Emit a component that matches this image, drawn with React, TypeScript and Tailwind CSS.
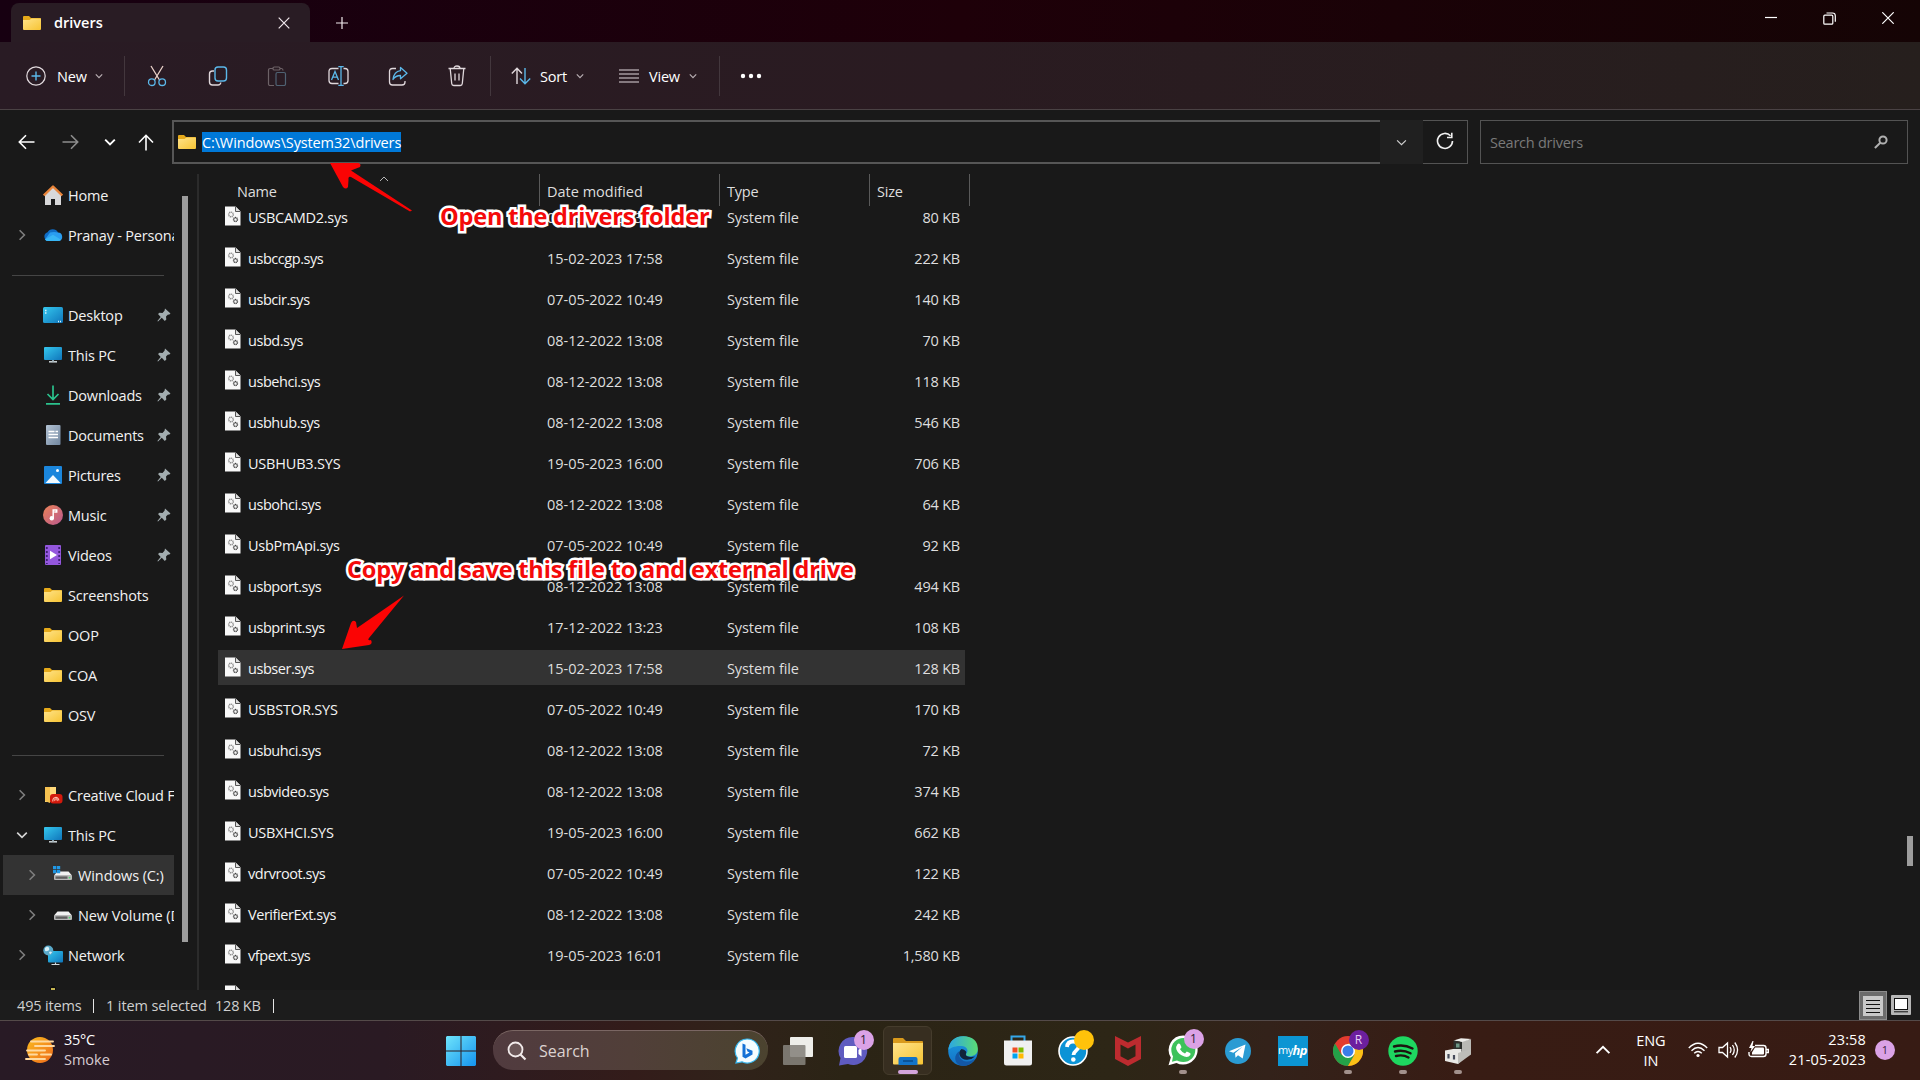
import { useState } from "react";
import type { ReactNode } from "react";

interface DriverFile {
  name: string;
  modified: string;
  size: string;
}

interface NavItem {
  label: string;
  icon: ReactNode;
  pinned?: boolean;
  chevron?: "right" | "down";
  nested?: boolean;
  active?: boolean;
}

const FILES: DriverFile[] = [
  { name: "USBCAMD2.sys", modified: "08-12-2022 13:08", size: "80 KB" },
  { name: "usbccgp.sys", modified: "15-02-2023 17:58", size: "222 KB" },
  { name: "usbcir.sys", modified: "07-05-2022 10:49", size: "140 KB" },
  { name: "usbd.sys", modified: "08-12-2022 13:08", size: "70 KB" },
  { name: "usbehci.sys", modified: "08-12-2022 13:08", size: "118 KB" },
  { name: "usbhub.sys", modified: "08-12-2022 13:08", size: "546 KB" },
  { name: "USBHUB3.SYS", modified: "19-05-2023 16:00", size: "706 KB" },
  { name: "usbohci.sys", modified: "08-12-2022 13:08", size: "64 KB" },
  { name: "UsbPmApi.sys", modified: "07-05-2022 10:49", size: "92 KB" },
  { name: "usbport.sys", modified: "08-12-2022 13:08", size: "494 KB" },
  { name: "usbprint.sys", modified: "17-12-2022 13:23", size: "108 KB" },
  { name: "usbser.sys", modified: "15-02-2023 17:58", size: "128 KB" },
  { name: "USBSTOR.SYS", modified: "07-05-2022 10:49", size: "170 KB" },
  { name: "usbuhci.sys", modified: "08-12-2022 13:08", size: "72 KB" },
  { name: "usbvideo.sys", modified: "08-12-2022 13:08", size: "374 KB" },
  { name: "USBXHCI.SYS", modified: "19-05-2023 16:00", size: "662 KB" },
  { name: "vdrvroot.sys", modified: "07-05-2022 10:49", size: "122 KB" },
  { name: "VerifierExt.sys", modified: "08-12-2022 13:08", size: "242 KB" },
  { name: "vfpext.sys", modified: "19-05-2023 16:01", size: "1,580 KB" },
];

/* ---------- small icons ---------- */

function Chevron({ className = "", dir = "down", w = 8, sw = 1.2 }: { className?: string; dir?: "down" | "up" | "right"; w?: number; sw?: number }) {
  const d = dir === "down" ? "M1 3l4 4 4-4" : dir === "up" ? "M1 7l4-4 4 4" : "M3 1l4 4-4 4";
  return (
    <svg width={w} height={w} viewBox="0 0 10 10" className={`shrink-0 ${className}`} fill="none" stroke="currentColor" strokeWidth={(sw * 10) / w}>
      <path d={d} />
    </svg>
  );
}

function FolderIcon() {
  return (
    <svg width="20" height="16" viewBox="0 0 20 16" className="shrink-0">
      <path d="M1 2q0-1 1-1h5l2 2h9q1 0 1 1v3H1z" fill="#e5a91a" />
      <path d="M1 5h6.500L9.500 3.500H19V14q0 1-1 1H2q-1 0-1-1z" fill="url(#folder)" />
    </svg>
  );
}

function FileIcon() {
  return (
    <svg width="16" height="20" viewBox="0 0 16 20" className="mb-[2px] shrink-0">
      <path d="M0 .5h10.500L15.500 5.500V19.500H0z" fill="#f8f8f8" />
      <path d="M10.500.5V5.500h5" fill="#ddd" stroke="#555" strokeWidth="1" />
      <circle cx="6" cy="8.500" r="2.300" fill="none" stroke="#8f8f8f" strokeWidth="1.500" strokeDasharray="1.100 .5" />
      <circle cx="10.500" cy="13.500" r="1.900" fill="none" stroke="#444" strokeWidth="1.500" strokeDasharray="1.100 .4" />
    </svg>
  );
}

function PinIcon() {
  return (
    <svg width="14" height="14" viewBox="0 0 14 14" className="shrink-0">
      <path d="M8 .5L13.500 5.500l-1.500 1.300-1-.2-2 2 .3 2.900L7.800 13l-3-3.300L1 13.500.4 13l3.300-4L1 6l1.500-1.200 3 .2 2-2.200z" fill="#a3adb0" />
    </svg>
  );
}

const HomeIcon = () => (
  <svg width="20" height="20" viewBox="0 0 20 20">
    <path d="M2 9.500L10 2l8 7.500V20h-6v-6H8v6H2z" fill="#d8d8da" />
    <path d="M.8 10.500L10 1.500l9.200 9" fill="none" stroke="#e8843a" strokeWidth="2.400" strokeLinejoin="round" />
  </svg>
);

const OneDriveIcon = () => (
  <svg width="20" height="14" viewBox="0 0 20 14">
    <path d="M5 13a4.500 4.500 0 01-.5-8.700A6 6 0 0115 4.500l-6 8.500z" fill="#0f6cc4" />
    <path d="M7 4.500q4-1 8 0a4.300 4.300 0 01.8 8.500H5a4 4 0 01-3-1.500z" fill="#2a9df0" />
    <path d="M2 11.500l8-4.700 8 5q-1 1.200-2.500 1.200H5q-2 0-3-1.500z" fill="#38b6f5" />
  </svg>
);

const DesktopIcon = () => (
  <svg width="20" height="16" viewBox="0 0 20 16">
    <rect width="20" height="16" rx="1.500" fill="url(#screen)" />
    <path d="M2 3.500h1.500M2 6h1.500M15 14.500h1M17 14.500h1" stroke="#d7f5ff" strokeWidth="1.300" />
  </svg>
);

const PcIcon = () => (
  <svg width="20" height="18" viewBox="0 0 20 18">
    <rect x="1" y="1" width="18" height="13" rx="1" fill="url(#screen)" />
    <path d="M6 15.800h8" stroke="#cfd8dc" strokeWidth="1.500" />
    <path d="M10 14v1.500" stroke="#8fa4ad" strokeWidth="2" />
  </svg>
);

const DownloadIcon = () => (
  <svg width="20" height="20" viewBox="0 0 20 20" fill="none" stroke="#2bc28d" strokeWidth="1.700">
    <path d="M10 .5v14M4.500 9l5.500 5.500L15.500 9M3 18.800h14" />
  </svg>
);

const DocumentIcon = () => (
  <svg width="20" height="20" viewBox="0 0 20 20">
    <rect x="3" width="14.500" height="20" rx="1" fill="url(#doc)" />
    <path d="M5.500 6.500h6M5.500 9.500h9.500M5.500 12.500h9.500M12.500 6.500h2.500" stroke="#fff" strokeWidth="1.400" />
  </svg>
);

const PictureIcon = () => (
  <svg width="20" height="18" viewBox="0 0 20 18">
    <rect x="1" width="18" height="18" rx="1" fill="#1b86dc" />
    <path d="M2.500 17l7.500-8 7.500 8z" fill="#f2faff" />
    <circle cx="14.500" cy="4.500" r="1.500" fill="#fff" />
  </svg>
);

const MusicIcon = () => (
  <svg width="20" height="20" viewBox="0 0 20 20">
    <circle cx="10" cy="10" r="10" fill="url(#music)" />
    <path d="M10.200 13.500V5h3.500v2h-2.500" fill="none" stroke="#fff" strokeWidth="1.500" />
    <circle cx="8.800" cy="13.300" r="2.200" fill="#fff" />
  </svg>
);

const VideoIcon = () => (
  <svg width="20" height="20" viewBox="0 0 20 20">
    <rect x="2" width="16" height="20" rx="1" fill="#9457dd" />
    <path d="M3.800 2v17M16.200 2v17" stroke="#3f2075" strokeWidth="1.800" strokeDasharray="2 2" />
    <path d="M7 5.800l7 4.200-7 4.200z" fill="#fff" />
  </svg>
);

const CreativeIcon = () => (
  <svg width="20" height="18" viewBox="0 0 20 18">
    <path d="M2 1h11v11l-6 4H2z" fill="#ffd97a" />
    <path d="M2 1h5v16l-5-2z" fill="#f5c150" />
    <rect x="7" y="8" width="12.500" height="9.500" rx="3" fill="#d3190c" />
    <path d="M10 15.500a3 3 0 115.800-1M12 15a1.300 1.300 0 112 0" fill="none" stroke="#ffb9a8" strokeWidth="1.100" />
  </svg>
);

const DriveIcon = ({ system = false }) => (
  <svg width="20" height="18" viewBox="0 0 20 18">
    <path d="M4.500 5.500h11L19 9.500H1z" fill="#f1f1f1" />
    <rect x="1" y="9" width="18" height="5" rx="1" fill="#b9b9b9" />
    <path d="M2.500 11.600h12" stroke="#606060" strokeWidth="2.400" />
    <circle cx="16.500" cy="11.600" r=".9" fill="#4ad66d" />
    {system && <path d="M0 0h3.300v3.300H0zM3.900 0h3.300v3.300H3.900zM0 3.900h3.300v3.300H0zM3.900 3.900h3.300v3.300H3.900z" fill="#2098e6" />}
  </svg>
);

const NetworkIcon = () => (
  <svg width="20" height="21" viewBox="0 0 20 21">
    <rect x="5" y="6" width="15" height="11.500" rx="1" fill="url(#screen)" />
    <path d="M8.500 19.500h8M12.500 17.500v2" stroke="#cfd8dc" strokeWidth="1.200" />
    <circle cx="5.300" cy="5.500" r="5" fill="#5aa9c9" />
    <path d="M2 3q3-2.500 4 0t-2 3q-2 1-2-1M6 7q2-1 3 .5l-2 2z" fill="#d8f0f8" />
  </svg>
);

const PenguinIcon = () => (
  <svg width="20" height="20" viewBox="0 0 20 20">
    <path d="M7 3q0-3 3-3t3 3v4q4 5 3 12H4Q3 12 7 7z" fill="#0c0c0c" />
    <path d="M8 2h4v2H8z" fill="#c5b552" />
  </svg>
);

/* ---------- data that needs the icons ---------- */

const NAV: (NavItem | "divider")[] = [
  { label: "Home", icon: <HomeIcon /> },
  { label: "Pranay - Personal", icon: <OneDriveIcon />, chevron: "right" },
  "divider",
  { label: "Desktop", icon: <DesktopIcon />, pinned: true },
  { label: "This PC", icon: <PcIcon />, pinned: true },
  { label: "Downloads", icon: <DownloadIcon />, pinned: true },
  { label: "Documents", icon: <DocumentIcon />, pinned: true },
  { label: "Pictures", icon: <PictureIcon />, pinned: true },
  { label: "Music", icon: <MusicIcon />, pinned: true },
  { label: "Videos", icon: <VideoIcon />, pinned: true },
  { label: "Screenshots", icon: <FolderIcon /> },
  { label: "OOP", icon: <FolderIcon /> },
  { label: "COA", icon: <FolderIcon /> },
  { label: "OSV", icon: <FolderIcon /> },
  "divider",
  { label: "Creative Cloud Files", icon: <CreativeIcon />, chevron: "right" },
  { label: "This PC", icon: <PcIcon />, chevron: "down" },
  { label: "Windows (C:)", icon: <DriveIcon system />, chevron: "right", nested: true, active: true },
  { label: "New Volume (D:)", icon: <DriveIcon />, chevron: "right", nested: true },
  { label: "Network", icon: <NetworkIcon />, chevron: "right" },
];

/* ---------- window chrome ---------- */

function TitleBar() {
  return (
    <div className="flex h-[42px] shrink-0 bg-linear-to-r from-[#170011] via-[#1e0009] to-[#150405]">
      <div className="ml-[11px] mt-[3px] flex h-[39px] w-[299px] items-center rounded-t-lg bg-[#291c24] pl-[11px] pr-5">
        <FolderIcon />
        <span className="ml-3 text-[14.5px] font-semibold text-white">drivers</span>
        <svg width="12" height="12" viewBox="0 0 12 12" className="ml-auto" stroke="#f1e9ed" strokeWidth="1.200">
          <path d="M.7.7l10.600 10.600M11.300.7L.7 11.300" />
        </svg>
      </div>
      <svg width="12" height="12" viewBox="0 0 12 12" className="ml-[26px] mt-[17px]" stroke="#f1e9ed" strokeWidth="1.200">
        <path d="M6 0v12M0 6h12" />
      </svg>
      <div className="ml-auto mr-[26px] flex items-center gap-[46px] pb-[6px]">
        <svg width="12" height="12" viewBox="0 0 12 12" stroke="#fff" strokeWidth="1.200">
          <path d="M0 5.500h12" />
        </svg>
        <svg width="13" height="13" viewBox="0 0 13 13" fill="none" stroke="#fff" strokeWidth="1.200">
          <rect x=".8" y="3.200" width="9" height="9" rx="1" />
          <path d="M3.500 1h6q2.800 0 2.800 2.800v6" />
        </svg>
        <svg width="12" height="12" viewBox="0 0 12 12" stroke="#fff" strokeWidth="1.200">
          <path d="M.3.3l11.400 11.400M11.700.3L.3 11.700" />
        </svg>
      </div>
    </div>
  );
}

function Separator() {
  return <div className="h-10 w-px shrink-0 bg-[#43373d]" />;
}

function Toolbar() {
  return (
    <div className="flex h-[68px] shrink-0 items-center border-b border-[#4a4244] bg-linear-to-r from-[#291b24] via-[#2a1b21] to-[#261f1d] text-[14.5px] tracking-[-0.2px] text-white">
      <button type="button" className="ml-[26px] flex w-[98px] items-center">
        <svg width="20" height="20" viewBox="0 0 20 20" fill="none" strokeWidth="1.200">
          <circle cx="10" cy="10" r="9.200" stroke="#e3dbdf" />
          <path d="M10 5.500v9M5.500 10h9" stroke="#5bb8ea" strokeWidth="1.400" />
        </svg>
        <span className="ml-[11px] mr-auto pt-[2px]">New</span>
        <Chevron className="mr-[21px] text-[#b8aeb2]" />
      </button>
      <Separator />
      <div className="ml-[21px] flex w-[344px] items-center justify-between pr-6">
        <svg width="22" height="22" viewBox="0 0 22 22" fill="none" strokeWidth="1.300">
          <path d="M5 1l8.500 14M17 1L8.500 15" stroke="#ead2c9" />
          <circle cx="5.800" cy="17.200" r="3.300" stroke="#5bb8ea" />
          <circle cx="16.200" cy="17.200" r="3.300" stroke="#5bb8ea" />
        </svg>
        <svg width="20" height="20" viewBox="0 0 20 20" fill="none" strokeWidth="1.400">
          <path d="M6 5H4.500Q1.500 5 1.500 8v8q0 3 3 3H10q2.500 0 2.800-2.500" stroke="#e0d8dc" />
          <rect x="7" y="1" width="11.500" height="14" rx="3" stroke="#5bb8ea" />
        </svg>
        <svg width="20" height="20" viewBox="0 0 20 20" fill="none" strokeWidth="1.200" stroke="#6d6267">
          <path d="M6 2.500H3.200q-1.700 0-1.700 1.700V18q0 1.500 1.500 1.500h4M13 2.500h1.500q1.500 0 1.500 2" />
          <rect x="6" y="1" width="7" height="3" rx="1.300" />
          <rect x="9" y="6.500" width="9.500" height="13" rx="1.500" stroke="#4f6273" />
        </svg>
        <svg width="22" height="20" viewBox="0 0 22 20" fill="none" strokeWidth="1.300">
          <path d="M11.500 2.500H5Q2 2.500 2 5.500v9q0 3 3 3h6.500M16.500 2.500h1.500q3 0 3 3v9q0 3-3 3h-1.500" stroke="#e0d8dc" />
          <path d="M14 .7v18.600M11.300.7h5.400M11.300 19.300h5.400M4.500 14L8 5.500l3.500 8.500M5.800 11.200h4.500" stroke="#5bb8ea" />
        </svg>
        <svg width="20" height="20" viewBox="0 0 20 20" fill="none" strokeWidth="1.300">
          <path d="M8 2.500H4.500q-3 0-3 3V16q0 3 3 3h9.500q3 0 3-3v-1" stroke="#e0d8dc" />
          <path d="M12.500 1.500L19 7.200l-6.500 5.600V9.500q-5 0-7.500 4Q6 5.500 12.500 4.700z" stroke="#5bb8ea" strokeLinejoin="round" />
        </svg>
        <svg width="18" height="22" viewBox="0 0 18 22" fill="none" strokeWidth="1.300" stroke="#e0d8dc">
          <path d="M.5 3.500h17M2.200 3.500l1.500 15q.2 2 2 2h6.600q1.800 0 2-2l1.500-15M6 3.500q0-2.500 3-2.500t3 2.500M7 8.500v7M11 8.500v7" />
        </svg>
      </div>
      <Separator />
      <button type="button" className="ml-5 flex items-center">
        <svg width="20" height="18" viewBox="0 0 20 18" fill="none" strokeWidth="1.400">
          <path d="M6 17V1.500M.8 6.500L6 1.200l5 5.300" stroke="#e0d8dc" />
          <path d="M14 1v15.500M9 11.500l5 5.200 5.200-5.200" stroke="#5bb8ea" />
        </svg>
        <span className="ml-[9px] w-[36px] pt-[2px] text-left">Sort</span>
        <Chevron className="text-[#b8aeb2]" />
      </button>
      <button type="button" className="ml-[35px] flex items-center">
        <svg width="20" height="14" viewBox="0 0 20 14" stroke="#e0d8dc" strokeWidth="1.200">
          <path d="M0 1h20M0 5h20M0 9h20M0 13h20" />
        </svg>
        <span className="ml-[10px] w-[40px] pt-[2px] text-left">View</span>
        <Chevron className="text-[#b8aeb2]" />
      </button>
      <div className="ml-[22px]">
        <Separator />
      </div>
      <svg width="22" height="6" viewBox="0 0 22 6" className="ml-5" fill="#fff">
        <circle cx="3" cy="3" r="2.200" />
        <circle cx="11" cy="3" r="2.200" />
        <circle cx="19" cy="3" r="2.200" />
      </svg>
    </div>
  );
}

function AddressRow() {
  return (
    <div className="flex h-[64px] shrink-0 items-start pt-[10px]">
      <div className="flex h-11 w-[172px] items-center">
        <svg width="17" height="16" viewBox="0 0 17 16" className="ml-[18px]" fill="none" stroke="#fff" strokeWidth="1.600">
          <path d="M16.500 8H1.500M8 1.200L1.300 8 8 14.800" />
        </svg>
        <svg width="17" height="16" viewBox="0 0 17 16" className="ml-[27px]" fill="none" stroke="#8d8d8d" strokeWidth="1.600">
          <path d="M.5 8h15M9 1.200L15.700 8 9 14.800" />
        </svg>
        <Chevron className="ml-[25px] text-white" w={12} sw={1.900} />
        <svg width="16" height="17" viewBox="0 0 16 17" className="ml-[22px]" fill="none" stroke="#fff" strokeWidth="1.600">
          <path d="M8 16.500v-15M1 8.500L8 1.300l7 7.200" />
        </svg>
      </div>
      <div className="flex h-11 w-[1208px] items-center border-2 border-r-0 border-[#565656] pl-[3px]">
        <FolderIcon />
        <span className="ml-[5px] h-5 w-[199px] bg-[#0078d7] text-[14.5px] leading-[21px] tracking-[-0.13px] whitespace-nowrap text-white">
          C:\Windows\System32\drivers
        </span>
      </div>
      <div className="flex h-11 w-[43px] items-center justify-center bg-[#202020]">
        <Chevron className="text-[#cfcfcf]" w={11} />
      </div>
      <div className="flex h-11 w-[45px] items-center justify-center border border-l-0 border-[#535353] pb-[3px]">
        <svg width="18" height="18" viewBox="0 0 18 18" fill="none" stroke="#f0f0f0" strokeWidth="1.600">
          <path d="M14.500 3.800A7.500 7.500 0 1016.500 9M15.800.8v4.700H11" />
        </svg>
      </div>
      <div className="ml-3 flex h-11 w-[428px] items-center border border-[#535353] pl-[9px] pr-[19px] text-[14.5px] tracking-[-0.25px] text-[#7a7a7a]">
        <span className="pt-[2px]">Search drivers</span>
        <svg width="14" height="14" viewBox="0 0 14 14" className="ml-auto" fill="none" stroke="#b0b0b0">
          <circle cx="9" cy="5" r="3.600" strokeWidth="2" />
          <path d="M6.300 7.700L.9 13" strokeWidth="2" />
        </svg>
      </div>
    </div>
  );
}

function NavRow({ item }: { item: NavItem }) {
  return (
    <div
      className={`flex h-10 shrink-0 items-center overflow-hidden ${item.active ? "bg-[#333333]" : ""} ${
        item.nested ? "pl-[10px] tracking-[-0.1px]" : "tracking-[-0.2px]"
      }`}
    >
      <div className="flex w-[38px] shrink-0 items-center pl-[13px]">
        {item.chevron && (
          <Chevron
            dir={item.chevron}
            w={12}
            sw={1.600}
            className={item.chevron === "down" ? "text-[#d5d5d5]" : "text-[#7e7e7e]"}
          />
        )}
      </div>
      <div className="ml-[2px] flex w-5 shrink-0 items-center justify-center">{item.icon}</div>
      <span className="ml-[5px] pt-[2px] whitespace-nowrap">{item.label}</span>
      {item.pinned && (
        <div className="ml-auto mr-[3px]">
          <PinIcon />
        </div>
      )}
    </div>
  );
}

function Sidebar() {
  return (
    <div className="flex w-[199px] shrink-0 overflow-hidden border-r-2 border-[#2b2b2b]">
      <div className="ml-[3px] flex w-[171px] shrink-0 flex-col overflow-hidden pt-[1px] text-[14.5px] text-[#f2f2f2]">
        {NAV.map((item, i) =>
          item === "divider" ? (
            <div key={i} className="flex h-10 shrink-0 items-center pr-[10px] pl-[9px]">
              <div className="h-px w-full bg-[#454545]" />
            </div>
          ) : (
            <NavRow key={i} item={item} />
          )
        )}
        {/* last entry, mostly hidden behind the status bar */}
        <div className="flex h-10 shrink-0 pt-[11px] pl-[40px]">
          <PenguinIcon />
          <span className="ml-[5px] leading-5">Linux</span>
        </div>
      </div>
      <div className="ml-[8px] mt-[22px] h-[746px] w-[6px] bg-[#9d9d9d]" />
    </div>
  );
}

function FileList() {
  const [selected, setSelected] = useState("usbser.sys");
  return (
    <div className="relative flex grow flex-col overflow-hidden text-[14.5px] text-[#dedede]">
      <div className="flex h-[25px] shrink-0 pl-[19px]">
        <div className="flex h-8 w-[322px] items-center border-r border-[#5a5a5a] pl-[19px] pt-[3px] tracking-[-0.2px]">Name</div>
        <div className="flex h-8 w-[180px] items-center border-r border-[#5a5a5a] pl-[7px] pt-[3px]">Date modified</div>
        <div className="flex h-8 w-[150px] items-center border-r border-[#5a5a5a] pl-[7px] pt-[3px] tracking-[-0.2px]">Type</div>
        <div className="flex h-8 w-[100px] items-center border-r border-[#5a5a5a] pl-[7px] pt-[3px] tracking-[-0.2px]">Size</div>
      </div>
      <Chevron dir="up" w={10} sw={1} className="absolute left-[180px] top-0 text-[#b5b5b5]" />
      <div className="flex flex-col gap-[6px] pl-[19px]">
        {FILES.map((file) => (
          <div
            key={file.name}
            onClick={() => setSelected(file.name)}
            className={`flex h-[35px] w-[747px] shrink-0 items-center pl-[7px] ${selected === file.name ? "bg-[#333333]" : ""}`}
          >
            <FileIcon />
            <span
              className={`ml-[7px] w-[299px] pt-[2px] text-[#f4f4f4] ${
                file.name.endsWith("SYS") ? "tracking-[-0.2px]" : file.name.startsWith("U") ? "tracking-[-0.28px]" : "tracking-[-0.45px]"
              }`}
            >
              {file.name}
            </span>
            <span className="w-[180px] pt-[2px] tracking-[-0.04px]">{file.modified}</span>
            <span className="w-[150px] pt-[2px] tracking-[-0.1px]">System file</span>
            <span className="w-[83px] pt-[2px] text-right tracking-[-0.2px]">{file.size}</span>
          </div>
        ))}
        <div className="flex h-[35px] shrink-0 items-center pl-[7px]">
          <FileIcon />
        </div>
      </div>
      <div className="absolute right-[7px] top-[662px] h-[30px] w-[6px] bg-[#9d9d9d]" />
    </div>
  );
}

function StatusBar() {
  return (
    <div className="flex h-[30px] shrink-0 items-center bg-[#1c1c1c] pl-[17px] pt-px text-[14.5px] text-[#cfcfcf]">
      <span className="w-[76px] tracking-[-0.15px]">495 items</span>
      <div className="h-[14px] w-px bg-[#e5e5e5]" />
      <span className="ml-[12px] w-[109px] whitespace-nowrap tracking-[-0.1px]">1 item selected</span>
      <span className="w-[58px] whitespace-nowrap tracking-[-0.2px]">128 KB</span>
      <div className="h-[14px] w-px bg-[#e5e5e5]" />
      <div className="ml-auto flex h-[29px] w-7 items-center justify-center border border-[#8c8c8c] bg-[#6c6c6c]">
        <svg width="20" height="20" viewBox="0 0 20 20">
          <rect width="20" height="20" fill="#c9c9c9" />
          <path d="M3 4.500h14M3 8.500h14M3 12.500h14M3 16.500h14" stroke="#111" strokeWidth="1.200" />
        </svg>
      </div>
      <svg width="20" height="20" viewBox="0 0 20 20" className="ml-1 mr-[9px] mb-[2px]">
        <rect width="20" height="20" rx="1" fill="#b7b7b7" />
        <rect x="3.500" y="3.500" width="13" height="11" fill="#fff" stroke="#111" />
        <path d="M3 16.800h14" stroke="#111" />
      </svg>
    </div>
  );
}

/* ---------- taskbar ---------- */

function TaskSlot({ children, running = false, active = false }: { children: ReactNode; running?: boolean; active?: boolean }) {
  return (
    <div className="relative flex h-full w-[55px] shrink-0 items-center justify-center">
      {active && <div className="absolute inset-x-[3px] top-[5px] h-[49px] rounded-md border border-[#453c2c] bg-[#372e20]" />}
      <div className="relative flex">{children}</div>
      {running && <div className="absolute bottom-[6px] h-[4px] w-[8px] rounded-full bg-[#a2918c]" />}
      {active && <div className="absolute bottom-[6px] h-[4px] w-[20px] rounded-full bg-[#d3a4dc]" />}
    </div>
  );
}

function Badge({ text, className }: { text: string; className: string }) {
  return (
    <div className={`absolute flex h-5 w-5 items-center justify-center rounded-full text-[12px] leading-none ${className}`}>{text}</div>
  );
}

function Taskbar() {
  return (
    <div className="relative flex h-[60px] shrink-0 border-t border-[#544a49] bg-[linear-gradient(90deg,#281a25_0%,#2a1a23_20%,#331c1a_33%,#30221a_38%,#2b2415_44%,#2d2616_58%,#33221a_66%,#381c14_76%,#371b14_100%)] text-[14.5px] text-white">
      <div className="flex w-[446px] shrink-0 items-center pl-[25px] pb-px">
        <svg width="30" height="28" viewBox="0 0 30 28">
          <circle cx="15" cy="14" r="13" fill="url(#sun)" />
          <path d="M6 5.500h22M10 10h19M2 14.500h18M4 18.500h8M16 18.500h10M1 23h19" stroke="#ffd9a0" strokeWidth="1.900" strokeLinecap="round" />
        </svg>
        <div className="ml-[9px] leading-5">
          <p className="tracking-[-0.3px]">35°C</p>
          <p className="text-[#d5cbd1]">Smoke</p>
        </div>
      </div>
      <svg width="30" height="30" viewBox="0 0 30 30" className="mt-[15px] shrink-0">
        <path d="M1 0h13.500v14.500H0V1zM15.500 0H29l1 1v13.500H15.500zM0 15.500h14.500V30H1l-1-1zM15.500 15.500H30V29l-1 1H15.500z" fill="url(#win)" />
      </svg>
      <div className="ml-[17px] mt-[9px] flex h-10 w-[275px] shrink-0 items-center rounded-full border-t border-[#7a6663] bg-linear-to-r from-[#513b3f] via-[#513f39] to-[#4b432f] pl-[14px] pr-2">
        <svg width="20" height="20" viewBox="0 0 20 20" fill="none" stroke="#f1eaea">
          <circle cx="8.500" cy="8.500" r="7" strokeWidth="1.800" fill="#6a5657" />
          <path d="M13.500 13.500l5 5" strokeWidth="2.200" />
        </svg>
        <span className="ml-3 text-[16px] text-[#dcd3d1]">Search</span>
        <svg width="26" height="26" viewBox="0 0 26 26" className="ml-auto">
          <path d="M13 1a12 12 0 11-5 22.800L2 25l1.500-5A12 12 0 0113 1z" fill="#f5fdff" stroke="#38b9f0" strokeWidth="1.200" />
          <path d="M8.500 5.500l3 1.200v10l4-2.300-2-1-1.200-3.200 6.200 2.600v3.600l-7 4-3-1.700z" fill="#1572d6" />
        </svg>
      </div>
      <div className="ml-[2px] flex h-full">
        <TaskSlot>
          <svg width="30" height="28" viewBox="0 0 30 28">
            <rect x="7" width="23" height="20" rx="1" fill="#eeeeea" />
            <rect y="8" width="22.500" height="20" rx="1" fill="#85827b" fillOpacity=".88" />
          </svg>
        </TaskSlot>
        <TaskSlot>
          <svg width="30" height="30" viewBox="0 0 30 30">
            <path d="M15 1a14 14 0 11-5 27L1 29.500 2.500 22A14 14 0 0115 1z" fill="#5f5bc0" />
            <rect x="6" y="10" width="13" height="12" rx="1.500" fill="#fff" />
            <path d="M20.500 14l3-2.500v9l-3-2.500z" fill="#fff" />
          </svg>
          <Badge text="1" className="-right-[6px] -top-[6px] bg-[#dba2e6] text-[#2a1a2e]" />
        </TaskSlot>
        <TaskSlot active>
          <svg width="30" height="28" viewBox="0 0 30 28">
            <path d="M0 2q0-1 1-1h9l3 3h16q1 0 1 1v6H0z" fill="#d99a1c" />
            <path d="M0 6h30v20.500q0 1-1 1H1q-1 0-1-1z" fill="url(#folder)" />
            <path d="M5.500 28v-6q0-2 2-2h15q2 0 2 2v6z" fill="#1273c9" />
            <path d="M10 24h10" stroke="#084a8a" strokeWidth="1.500" />
          </svg>
        </TaskSlot>
        <TaskSlot>
          <svg width="30" height="30" viewBox="0 0 30 30">
            <circle cx="15" cy="15" r="14.800" fill="url(#edge)" />
            <path d="M.3 14Q2 .3 15.500.3 29.700 1 29.800 13c0 5-4 7.500-8.500 7.300-3.500-.2-3.800-1.700-2.500-3.300 2-3-.5-7-5-7C7 9.500 2 12 .3 14z" fill="url(#edgeTop)" />
            <path d="M11.500 15c-2 4 1 10 7 10.500 4 .2 7-1.500 8.500-3-3 5.500-8 8-13 7.200C6 28 5 19 11.500 15z" fill="#1357a5" />
            <path d="M13.500 13q-3.500 3-1.500 7 2.500 4.500 8.500 3.500 4-.5 6.500-3-3 .8-6 .3-3.800-.6-3-3.300 1.500-3-4.500-4.500z" fill="#11243a" />
          </svg>
        </TaskSlot>
        <TaskSlot>
          <svg width="30" height="31" viewBox="0 0 30 31">
            <path d="M8.500 7V1.500h13V7" fill="none" stroke="#35a7e8" strokeWidth="2" />
            <path d="M1 5.500h28V28q0 2.500-2.500 2.500h-23Q1 30.500 1 28z" fill="#f0f0f0" />
            <path d="M9.500 12.500h5v5h-5z" fill="#f04e23" />
            <path d="M15.500 12.500h5v5h-5z" fill="#7fba00" />
            <path d="M9.500 18.500h5v5h-5z" fill="#00a4ef" />
            <path d="M15.500 18.500h5v5h-5z" fill="#ffb900" />
          </svg>
        </TaskSlot>
        <TaskSlot>
          <svg width="30" height="30" viewBox="0 0 30 30">
            <circle cx="15" cy="15" r="14" fill="#0b93d6" stroke="#fff" strokeWidth="1.600" />
            <path d="M9 11q.5-5.500 6-5.500t5.800 4.800c0 4-5.300 4.200-5.300 8.700" fill="none" stroke="#fff" strokeWidth="3.800" />
            <circle cx="15.300" cy="23.500" r="2.300" fill="#fff" />
          </svg>
          <Badge text="" className="-right-[6px] -top-[6px] bg-[#ffc20a]" />
        </TaskSlot>
        <TaskSlot>
          <svg width="28" height="30" viewBox="0 0 28 30">
            <path d="M1 0l13 6.500L27 0v23l-13 7L1 23zM6.500 8.500v11.700l7.500 4 7.500-4V8.500L14 12.500z" fill="#bd2b2f" fillRule="evenodd" />
          </svg>
        </TaskSlot>
        <TaskSlot running>
          <svg width="30" height="31" viewBox="0 0 30 31">
            <path d="M15.300.5a14.500 14.500 0 11-6.800 27.400L.5 30.300l2.300-7.800A14.500 14.500 0 0115.300.5z" fill="#fff" />
            <circle cx="15.300" cy="15" r="12" fill="#3dc25b" />
            <path d="M5.500 18.500L4 26.800l8-2z" fill="#3dc25b" />
            <path d="M9.300 9.500q1.500-2 3 0l1.200 2.700-1.500 2q2 3.200 5 4.200l1.800-2 3.200 1.600q1 .5.300 2-2 3-6 1.600-6-2-8-7.300-.6-2.800 1-4.800z" fill="#fff" />
          </svg>
          <Badge text="1" className="-right-[6px] -top-[6px] bg-[#dba2e6] text-[#2a1a2e]" />
        </TaskSlot>
        <TaskSlot>
          <svg width="26" height="28" viewBox="0 0 26 28">
            <circle cx="13" cy="14" r="13" fill="#2a9bd3" />
            <path d="M4 14.300L20.500 7.500l-2.800 14-4.700-3.200-2.500 2.500-.5-4.500 7.500-6.500-9.200 6z" fill="#fff" />
          </svg>
        </TaskSlot>
        <TaskSlot>
          <div className="flex h-[30px] w-[30px] items-center justify-center bg-[#0c95d3] text-[11px] tracking-[-0.6px] text-white">
            my<i className="text-[13px] font-bold">hp</i>
          </div>
        </TaskSlot>
        <TaskSlot running>
          <svg width="30" height="30" viewBox="0 0 30 30">
            <circle cx="15" cy="15" r="15" fill="#e33b2e" />
            <path d="M2 7.500A15 15 0 0015 30l6.500-11.200H8.500z" fill="#24a148" />
            <path d="M15 30A15 15 0 0028 7.500H15l6.500 11.300z" fill="#fbc116" />
            <circle cx="15" cy="15" r="7" fill="#fff" />
            <circle cx="15" cy="15" r="5.500" fill="#3a7de8" />
          </svg>
          <Badge text="R" className="-right-[6px] -top-[6px] bg-[#6c1f9e] text-[#e6cdf5]" />
        </TaskSlot>
        <TaskSlot running>
          <svg width="30" height="30" viewBox="0 0 30 30">
            <circle cx="15" cy="15" r="14.700" fill="#1ed760" />
            <path d="M6 10.500q9.500-2.800 18.500 2M7 15.500q8-2.300 15.500 1.800M8 20q7-1.800 12.500 1.500" fill="none" stroke="#1d1410" strokeWidth="2.400" strokeLinecap="round" />
          </svg>
        </TaskSlot>
        <TaskSlot running>
          <svg width="28" height="28" viewBox="0 0 28 28">
            <path d="M16 4l11-1.500V17l-11 5z" fill="#b9b9b5" />
            <path d="M9.500 3.500L17 1.200l10.500.8L18 5z" fill="#ededea" />
            <path d="M9.500 3.500L18 5v9.500H9.500z" fill="#2c2f2c" />
            <rect x="12" y="6.500" width="3.500" height="4" fill="#6c9584" />
            <path d="M1 13.500l8-1.500h8.500v11L14 27l-13-3z" fill="#e8e8e5" />
            <path d="M14 16l13-4v5.500L14 27z" fill="#bdbdb9" />
            <path d="M4.500 17v4.500M10 18v4.500" stroke="#454b5a" strokeWidth="2.200" />
          </svg>
        </TaskSlot>
      </div>

      <div className="ml-auto flex items-center pb-px">
        <Chevron dir="up" w={16} sw={1.900} className="mr-[25px] text-white" />
        <div className="w-[30px] pt-px text-center leading-5 tracking-[-0.2px]">
          <p>ENG</p>
          <p>IN</p>
        </div>
        <svg width="20" height="16" viewBox="0 0 20 16" className="ml-[22px]" fill="none" stroke="#fff" strokeWidth="1.400">
          <path d="M.8 6Q10-3.500 19.200 6M3.500 8.700q6.500-6.500 13 0M6.200 11.300q3.800-3.600 7.600 0" />
          <circle cx="10" cy="13.500" r="1.600" fill="#fff" stroke="none" />
        </svg>
        <svg width="21" height="18" viewBox="0 0 21 18" className="ml-[10px]" fill="none" stroke="#fff" strokeWidth="1.300">
          <path d="M1 6.500h3.500L9.500 2v14l-5-4.500H1zM12 6.200q2 2.800 0 5.600M14.500 4q3.500 5 0 10M16.800 1.500q5.500 7.500 0 15" />
        </svg>
        <svg width="21" height="18" viewBox="0 0 21 18" className="ml-[9px]" fill="none" stroke="#fff" strokeWidth="1.400">
          <path d="M7 4.500h8.500q2.500 0 2.500 2.500v6q0 2.500-2.500 2.500h-12Q1 15.500 1 13v-2M18.500 8.500h1.800v3h-1.800" />
          <path d="M7 6.500h8q1 0 1 1v5q0 1-1 1H4v-2z" fill="#fff" stroke="none" />
          <path d="M4.500 0L1 7h2.500L2.500 11 7 5H4.500l1-5z" fill="#fff" stroke="none" />
        </svg>
        <div className="ml-[20px] text-right leading-5 tracking-[0.15px]">
          <p>23:58</p>
          <p>21-05-2023</p>
        </div>
        <div className="ml-[9px] mr-[25px] flex h-5 w-5 items-center justify-center rounded-full bg-[#dba2e6] text-[11px] text-[#3a1d3d]">1</div>
      </div>
    </div>
  );
}

/* gradients shared by the icons */
function Gradients() {
  return (
    <svg width="0" height="0" className="absolute">
      <defs>
        <linearGradient id="folder" x1="0" y1="0" x2="1" y2="1">
          <stop offset="0" stopColor="#ffe38a" />
          <stop offset="1" stopColor="#f7c433" />
        </linearGradient>
        <linearGradient id="screen" x1="0" y1="0" x2="1" y2="1">
          <stop offset="0" stopColor="#35c8ee" />
          <stop offset="1" stopColor="#0f75bb" />
        </linearGradient>
        <linearGradient id="doc" x1="0" y1="0" x2="1" y2="1">
          <stop offset="0" stopColor="#b3c3d4" />
          <stop offset="1" stopColor="#71869f" />
        </linearGradient>
        <linearGradient id="music" x1="0" y1="0" x2="1" y2="1">
          <stop offset="0" stopColor="#ec8357" />
          <stop offset="1" stopColor="#b9588f" />
        </linearGradient>
        <linearGradient id="win" x1="0" y1="0" x2="1" y2="1">
          <stop offset="0" stopColor="#6fe4fb" />
          <stop offset="1" stopColor="#1493ee" />
        </linearGradient>
        <linearGradient id="sun" x1="0" y1="0" x2="1" y2="1">
          <stop offset="0" stopColor="#fbbc1e" />
          <stop offset="1" stopColor="#ee6a1c" />
        </linearGradient>
        <linearGradient id="edge" x1="0" y1="0" x2="0" y2="1">
          <stop offset="0" stopColor="#1b9de2" />
          <stop offset="1" stopColor="#1470c4" />
        </linearGradient>
        <linearGradient id="edgeTop">
          <stop offset="0" stopColor="#2ba6e4" />
          <stop offset="1" stopColor="#5bdc74" />
        </linearGradient>
      </defs>
    </svg>
  );
}

/* red notes drawn over the window */
function Note({ text, className }: { text: string; className: string }) {
  return (
    <div
      className={`absolute font-bold whitespace-nowrap text-[#f40a0a] [-webkit-text-stroke:5px_#ffffff] [paint-order:stroke_fill] [stroke-linejoin:round] ${className}`}
    >
      {text}
    </div>
  );
}

export default function App() {
  return (
    <div className="relative flex h-[1080px] w-[1920px] flex-col overflow-hidden bg-[#191919] font-['Open_Sans','Noto_Sans',sans-serif]">
      <Gradients />
      <TitleBar />
      <Toolbar />
      <AddressRow />
      <div className="flex min-h-0 grow">
        <Sidebar />
        <FileList />
      </div>
      <StatusBar />
      <Taskbar />

      <Note text="Open the drivers folder" className="left-[440px] top-[200px] text-[23.500px] leading-8 tracking-[-0.17px]" />
      <svg width="82" height="50" viewBox="0 0 82 50" className="absolute left-[330px] top-[163px]">
        <path d="M0 0H28.500Q31.500 1 30 4L21 7.500L82 47.500L80 48.500L21 14Q18 13 18.500 17L18 24Q16 27 13 24z" fill="#fb0404" />
      </svg>
      <Note text="Copy and save this file to and external drive" className="left-[347px] top-[553px] text-[23.500px] leading-8 tracking-[-0.17px]" />
      <svg width="64" height="54" viewBox="0 0 64 54" className="absolute left-[341px] top-[595px]">
        <path d="M1 54L10 28Q12 24 15 27L16 33L63 .5L28 43Q26 46 30 45Q32 49 28 50z" fill="#fb0404" />
      </svg>
    </div>
  );
}
